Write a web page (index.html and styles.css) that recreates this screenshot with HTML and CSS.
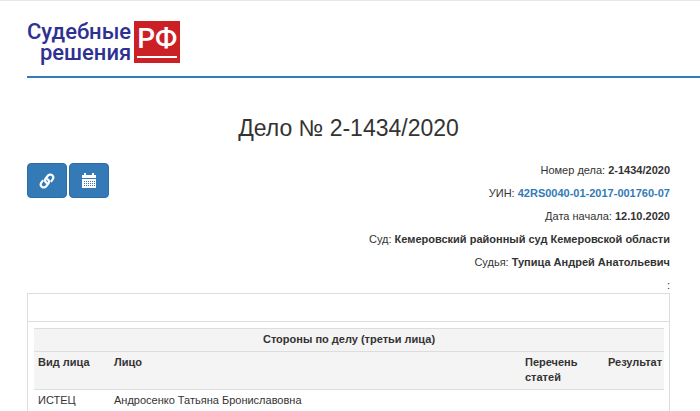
FILE: index.html
```
<!DOCTYPE html>
<html lang="ru">
<head>
  <meta charset="UTF-8">
  <meta name="viewport" content="width=device-width, initial-scale=1.0">
  <title>Дело № 2-1434/2020</title>
  <link rel="stylesheet" href="styles.css">
</head>
<body>
  <header class="header">
    <a class="logo" href="#">
      <span class="logo-name">Судебные<br>решения</span>
      <span class="logo-rf"><span class="logo-rf-text">РФ</span></span>
    </a>
  </header>

  <main class="container">
    <h1>Дело № 2-1434/2020</h1>

    <div class="case-top">
      <!-- Buttons -->
      <div class="buttons">
        <button class="btn" type="button" aria-label="Ссылка">
          <svg width="16" height="16" viewBox="0 0 16 16" fill="none" stroke="#fff" stroke-width="2.2">
            <path d="M8.600 10.200C6.400 9.900 5.300 7.500 6.600 5.700L8.600 3C9.800 1.300 11.800 1.200 13.100 2.200C14.500 3.300 14.600 5.100 13.500 6.600L11.800 8.800"/>
            <path d="M7.400 5.800C9.600 6.100 10.700 8.500 9.400 10.300L7.400 13C6.200 14.700 4.200 14.800 2.900 13.800C1.500 12.700 1.400 10.900 2.500 9.400L4.200 7.200"/>
          </svg>
        </button>
        <button class="btn" type="button" aria-label="Календарь">
          <svg width="14" height="15" viewBox="0 0 14 15">
            <path fill="#fff" d="M0 2h2V0h2v2h6V0h2v2h2v3H0zM0 6h14v9H0z"/>
            <path stroke="#337ab7" stroke-width="1" stroke-dasharray="1 1" d="M2 8.5h11M2 10.5h11M2 12.5h11"/>
          </svg>
        </button>
      </div>

      <!-- Case info -->
      <div class="case-info">
        <p>Номер дела: <b>2-1434/2020</b></p>
        <p>УИН: <a href="#"><b>42RS0040-01-2017-001760-07</b></a></p>
        <p>Дата начала: <b>12.10.2020</b></p>
        <p>Суд: <b>Кемеровский районный суд Кемеровской области</b></p>
        <p>Судья: <b>Тупица Андрей Анатольевич</b></p>
        <p>:</p>
      </div>
    </div>

    <div class="panel">
      <div class="panel-heading"></div>
      <div class="panel-body">
        <table class="table">
          <colgroup>
            <col class="col-type">
            <col>
            <col class="col-articles">
            <col class="col-result">
          </colgroup>
          <thead>
            <tr>
              <th class="table-title" colspan="4">Стороны по делу (третьи лица)</th>
            </tr>
            <tr>
              <th>Вид лица</th>
              <th>Лицо</th>
              <th>Перечень статей</th>
              <th>Результат</th>
            </tr>
          </thead>
          <tbody>
            <tr>
              <td>ИСТЕЦ</td>
              <td>Андросенко Татьяна Брониславовна</td>
              <td></td>
              <td></td>
            </tr>
          </tbody>
        </table>
      </div>
    </div>
  </main>
</body>
</html>
```

FILE: styles.css
```
/* General page styles */
* {
  box-sizing: border-box;
}

body {
  margin: 0;
  border-top: 1px solid #e7e7e7;
  background-color: #fff;
  color: #333;
  font-family: "Liberation Sans", Arial, sans-serif;
  font-size: 11px;
  line-height: 15px;
}

a {
  color: #337ab7;
  text-decoration: none;
}

/* Header */
.header {
  margin-left: 27px;
  padding: 20px 0 13px;
  border-bottom: 2px solid #337ab7;
}

.logo {
  display: inline-flex;
  gap: 3px;
  vertical-align: top;
  font-family: Roboto, sans-serif;
  font-weight: 500;
}

.logo-name {
  color: #2e3192;
  font-size: 22px;
  line-height: 21px;
  text-align: right;
}

.logo-rf {
  height: 42px;
  padding: 0 3px;
  background-color: #cc2027;
  color: #fff;
  font-size: 28px;
  line-height: 35px;
}

.logo-rf-text {
  display: block;
  border-bottom: 2px solid #fff;
}

/* Case */
.container {
  padding: 35px 30px 0 27px;
}

h1 {
  margin: 0 0 20px;
  font-size: 23px;
  font-weight: 400;
  line-height: 30px;
  text-align: center;
}

.case-top {
  display: flex;
  justify-content: space-between;
}

.buttons {
  display: flex;
  gap: 2px;
}

.btn {
  display: flex;
  align-items: center;
  justify-content: center;
  width: 40px;
  height: 35px;
  padding: 0;
  border: 1px solid #2e6da4;
  border-radius: 4px;
  background-color: #337ab7;
}

.case-info {
  text-align: right;
}

.case-info p {
  margin: 0 0 8px;
}

.case-info p:last-child {
  margin-bottom: 0;
}

/* Participants */
.panel {
  border: 1px solid #ddd;
}

.panel-heading {
  height: 28px;
  border-bottom: 1px solid #ddd;
}

.panel-body {
  padding: 6px 5px 4px 6px;
}

.table {
  width: 100%;
  table-layout: fixed;
  border-collapse: collapse;
}

.table th,
.table td {
  padding: 3px 4px 4px;
  border-top: 1px solid #ddd;
  text-align: left;
  vertical-align: top;
}

.table th {
  background-color: #f4f4f4;
}

.table .table-title {
  text-align: center;
}

.col-type {
  width: 76px;
}

.col-articles {
  width: 83px;
}

.col-result {
  width: 60px;
}
```
